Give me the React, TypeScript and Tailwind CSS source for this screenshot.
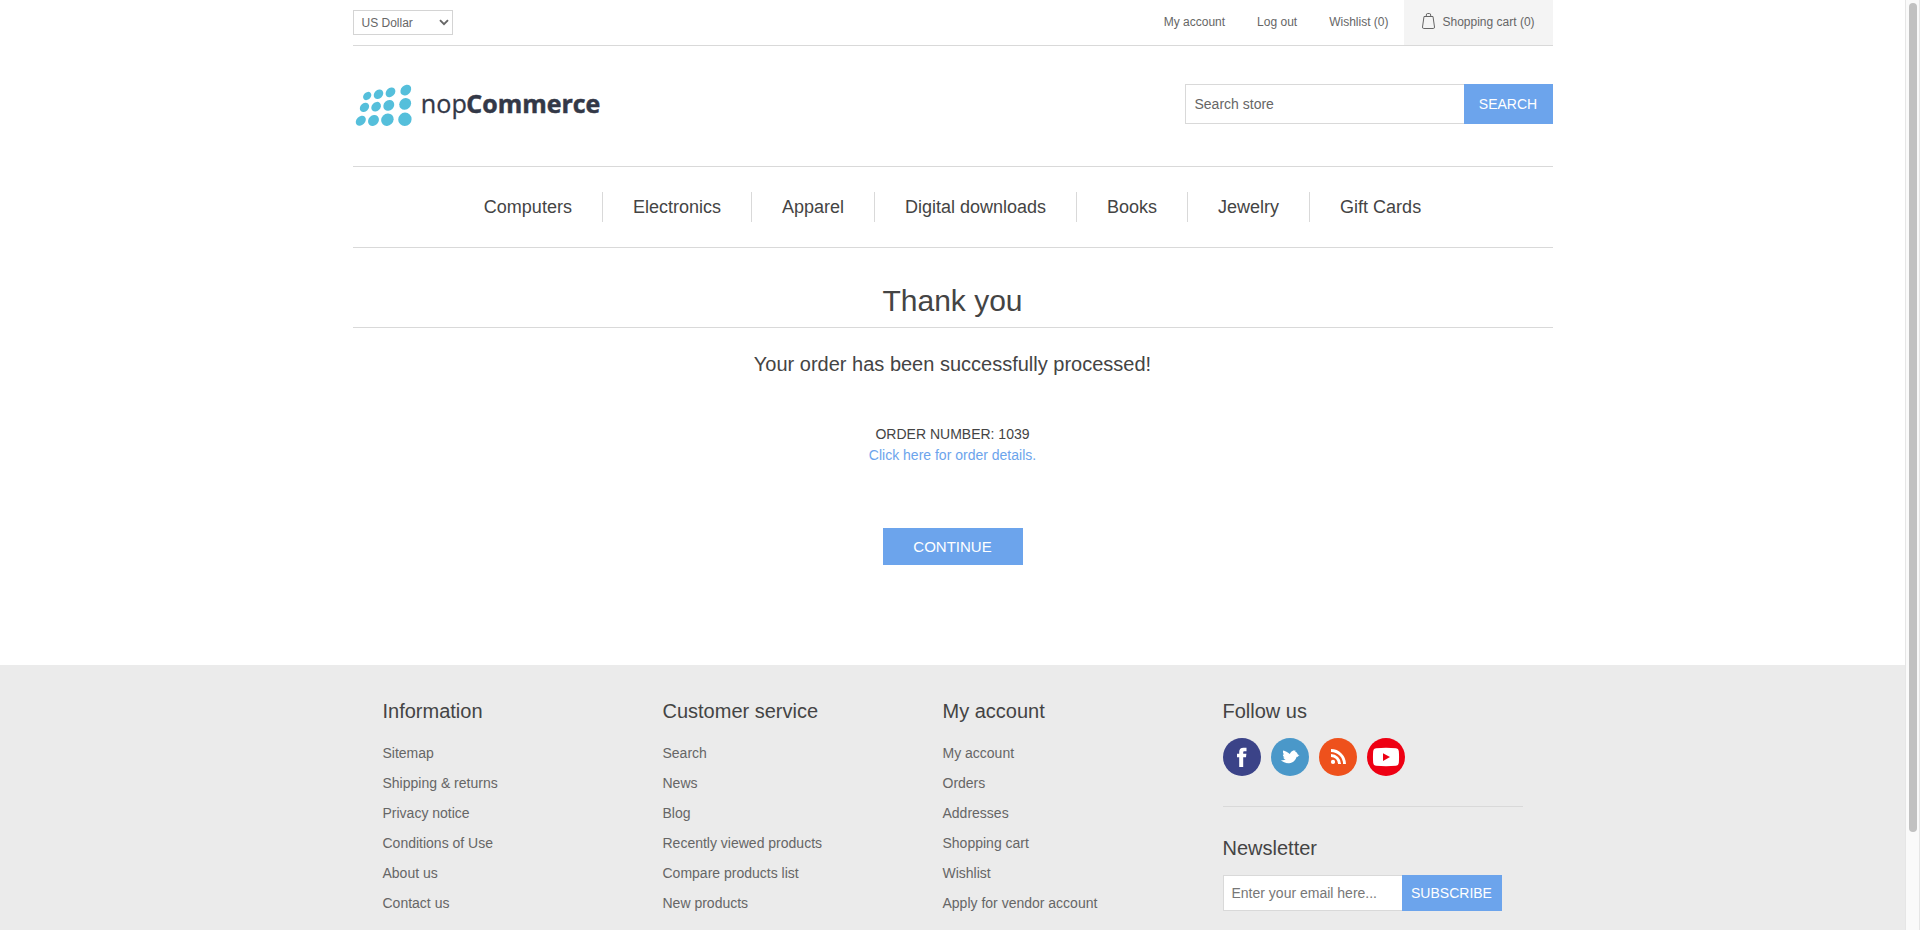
import React from "react";

const columns = [
  { title: "Information", links: ["Sitemap", "Shipping & returns", "Privacy notice", "Conditions of Use", "About us", "Contact us"] },
  { title: "Customer service", links: ["Search", "News", "Blog", "Recently viewed products", "Compare products list", "New products"] },
  { title: "My account", links: ["My account", "Orders", "Addresses", "Shopping cart", "Wishlist", "Apply for vendor account"] },
];

const menu = ["Computers", "Electronics", "Apparel", "Digital downloads", "Books", "Jewelry", "Gift Cards"];

// Center x, center y, long radius, short radius
const dots = [
  [27.2, 96, 4.6, 3.6], [38.5, 94.3, 5.3, 4.2], [50.5, 92.3, 5.5, 4.2], [65.8, 90.1, 6, 4.7],
  [24.5, 107.4, 5.2, 4.1], [36.1, 106.7, 5.3, 4.3], [48.8, 105.4, 5.9, 5], [65.2, 103.9, 6.3, 5.6],
  [20.8, 120.7, 5.7, 4.3], [33.5, 120.5, 5.9, 5], [47.4, 119.7, 6.6, 5.9], [64.9, 119.3, 6.8, 6.6],
];

function Logo() {
  return (
    <svg className="block h-[60px] w-[260px] overflow-visible" viewBox="13 75 260 60">
      {dots.map(([x, y, a, b]) => (
        <ellipse key={`${x}-${y}`} cx={x} cy={y} rx={a} ry={b} fill="#55bfdb" transform={`rotate(-45 ${x} ${y})`} />
      ))}
      <g fill="#333847" stroke="#333847" fontFamily="'Open Sans', 'Noto Sans', sans-serif">
        <text x="80.8" y="112.6" fontSize="26" strokeWidth="0.3" textLength="46" lengthAdjust="spacingAndGlyphs">nop</text>
        <text x="126.3" y="112.6" fontSize="25.5" strokeWidth="0.5" fontWeight="700" textLength="134" lengthAdjust="spacingAndGlyphs">Commerce</text>
      </g>
    </svg>
  );
}

function Social() {
  return (
    <div className="flex gap-[10px]">
      <svg className="size-[38px]" viewBox="0 0 38 38">
        <circle cx="19" cy="19" r="19" fill="#3b4388" />
        <path d="M16.2 29V19.3H14v-3.500h2.200v-1.700c0-2.800 1.400-4.300 4.300-4.300h3v3.500h-1.800c-1.200 0-1.500.5-1.500 1.400v1.100h3.200l-.4 3.500h-2.800V29z" fill="#fff" />
      </svg>
      <svg className="size-[38px]" viewBox="0 0 38 38">
        <circle cx="19" cy="19" r="19" fill="#4a98c9" />
        <path d="M9.700 22.100c2 .5 3.700.2 5-.8-1.300-.2-2.100-.9-2.400-1.900l1.300-.1c-1.200-.7-1.800-1.700-1.700-2.900l1.100.2c-1-1.300-1.300-2.600-.8-4.100 2.200.4 4.400 1.500 6.600 3.600.7-2 2.300-3.500 4.800-4.200l-.3 1 1.500-.4-.7 1.100c1.300.4 2.100 1.300 2.500 2.600l1.900 1.200-1.900.6.800 1-1.700-.2c-1.200 3.600-3.700 6.200-7.400 6.400-3.300.2-6.600-.9-8.600-3.100z" fill="#fff" />
      </svg>
      <svg className="size-[38px]" viewBox="0 0 38 38">
        <circle cx="19" cy="19" r="19" fill="#ee511c" />
        <circle cx="14" cy="23.900" r="2.100" fill="#fff" />
        <path d="M12 17.500a8.500 8.500 0 0 1 8.500 8.500M12 12.500a13.500 13.500 0 0 1 13.500 13.500" fill="none" stroke="#fff" strokeWidth="2.900" />
      </svg>
      <svg className="size-[38px]" viewBox="0 0 38 38">
        <circle cx="19" cy="19" r="19" fill="#ee0013" />
        <path d="M9 10.200q10-.7 20 0 2.600.2 2.800 2.800.5 6 0 12-.2 2.600-2.800 2.800-10 .7-20 0-2.600-.2-2.800-2.800-.5-6 0-12 .2-2.600 2.800-2.800z" fill="#fff" />
        <path d="M16 15.200v7.800l7-3.900z" fill="#ee0013" />
      </svg>
    </div>
  );
}

export default function App() {
  return (
    <div className="flex h-[930px] w-full overflow-hidden bg-white font-['Liberation_Sans',Arial,sans-serif] text-sm text-[#666]">
      <div className="flex min-w-0 flex-1 flex-col">
        <div className="mx-auto w-[1200px]">
          <header>
            <div className="flex h-[46px] justify-between border-b border-[#d9d9d9] text-xs">
              <div className="mt-[10px] flex h-[25px] w-[100px] items-center justify-between border border-[#d4d4d4] pl-2 pr-[3px]">
                <span>US Dollar</span>
                <svg className="h-[7px] w-[10px]" viewBox="0 0 10 7">
                  <path d="M1 1.200l4 4 4-4" fill="none" stroke="#666" strokeWidth="1.900" />
                </svg>
              </div>
              <div className="flex">
                <a className="mr-8 leading-[44px]">My account</a>
                <a className="mr-8 leading-[44px]">Log out</a>
                <a className="mr-[15px] leading-[44px]">Wishlist (0)</a>
                <a className="flex w-[149px] bg-[#f4f4f4] pl-[17px] leading-[44px]">
                  <svg className="mr-[7px] mt-3 h-[18px] w-[15px]" viewBox="0 0 15 18" fill="none" stroke="#666">
                    <path d="M3 4.500h9l1.500 10.500q.1 1.500-1.200 1.500H2.700q-1.300 0-1.200-1.500zM5.300 4.500V3q0-1.500 1.400-1.500h1.600Q9.700 1.500 9.700 3v1.500" />
                  </svg>
                  Shopping cart (0)
                </a>
              </div>
            </div>
            <div className="flex h-[120px] justify-between">
              <div className="mt-[29px]"><Logo /></div>
              <div className="mt-[38px] flex h-10">
                <div className="w-[279px] border border-r-0 border-[#d9d9d9] pl-[9px] leading-[38px]">Search store</div>
                <button className="w-[89px] bg-[#6ca4ec] text-sm text-white">SEARCH</button>
              </div>
            </div>
          </header>
          <nav className="flex h-[82px] items-center justify-center border-y border-[#d9d9d9] text-lg text-[#444]">
            {menu.map((m, i) => (
              <a key={m} className={i ? "border-l border-[#d9d9d9] px-[30px] leading-[30px]" : "px-[30px] leading-[30px]"}>{m}</a>
            ))}
          </nav>
          <main className="flex h-[417px] flex-col items-center text-[#444]">
            <h1 className="h-20 w-full border-b border-[#d9d9d9] pt-[35px] text-center text-3xl leading-[36px]">Thank you</h1>
            <h2 className="mt-6 text-xl leading-6">Your order has been successfully processed!</h2>
            <div className="mt-12 leading-[21px]">ORDER NUMBER: 1039</div>
            <a className="leading-[21px] text-[#6ca4ec]">Click here for order details.</a>
            <button className="mt-[62px] h-[37px] w-[140px] bg-[#6ca4ec] text-[15px] text-white">CONTINUE</button>
          </main>
        </div>
        <footer className="flex-1 bg-[#ebebeb]">
          <div className="mx-auto flex w-[1200px] px-[30px] pt-[33px]">
            {columns.map((c) => (
              <section key={c.title} className="w-[280px]">
                <h3 className="mb-[14px] text-xl leading-[26px] text-[#444]">{c.title}</h3>
                {c.links.map((l) => (
                  <a key={l} className="block leading-[30px]">{l}</a>
                ))}
              </section>
            ))}
            <section className="w-[300px]">
              <h3 className="mb-[14px] text-xl leading-[26px] text-[#444]">Follow us</h3>
              <Social />
              <h3 className="mt-[30px] border-t border-[#d9d9d9] pt-7 text-xl leading-[26px] text-[#444]">Newsletter</h3>
              <div className="mt-[14px] flex h-9">
                <div className="w-[179px] border border-r-0 border-[#d9d9d9] bg-white pl-2 leading-[34px] text-[#777]">Enter your email here...</div>
                <button className="w-[100px] bg-[#6ca4ec] text-white">SUBSCRIBE</button>
              </div>
            </section>
          </div>
        </footer>
      </div>
      <div className="w-[15px] border-x border-[#e6e6e6] bg-[#fafafa] pl-[3px] pt-[3px]">
        <div className="h-[829px] w-2 rounded-full bg-[#c1c1c1]" />
      </div>
    </div>
  );
}
